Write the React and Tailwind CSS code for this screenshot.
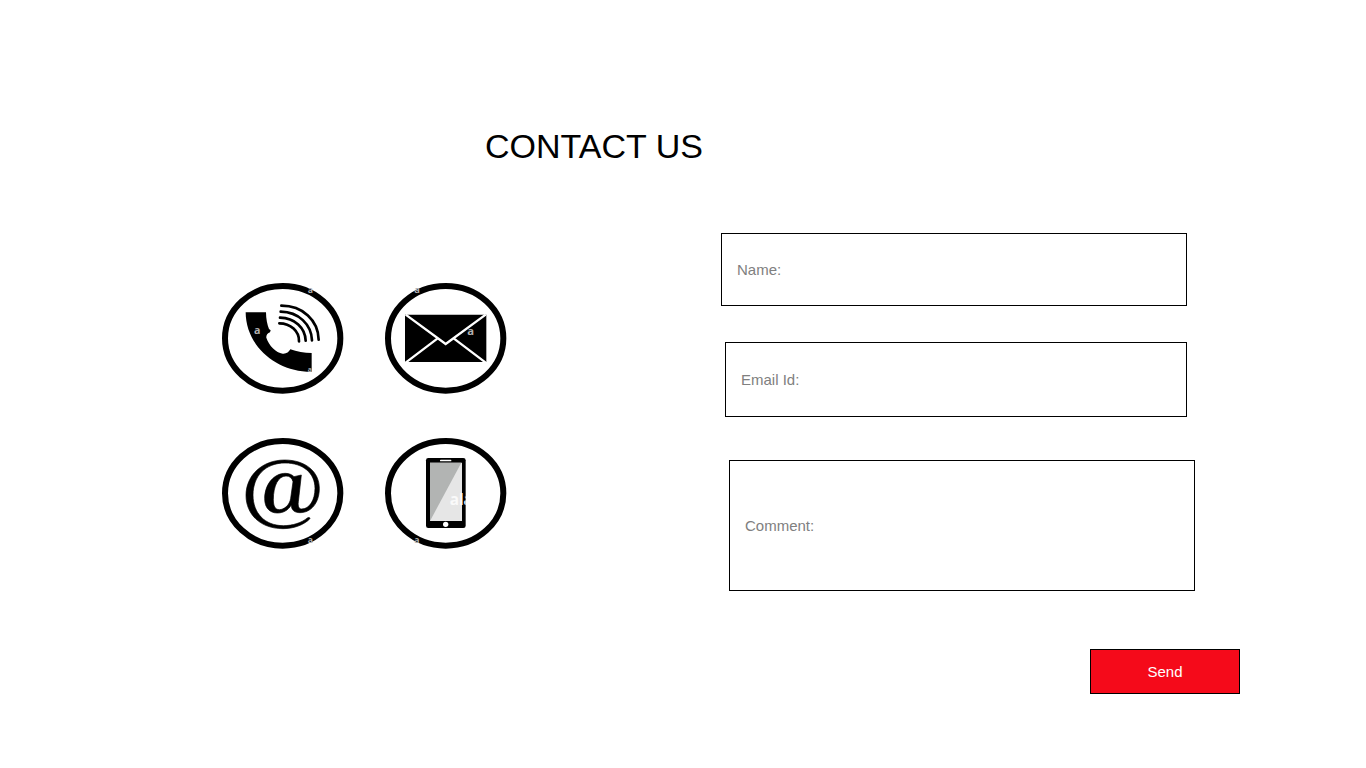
import React from "react";

function Mark({ x, y, size = 24 }) {
  return (
    <text x={x} y={y} fontSize={size} fontWeight="700" fill="#b0b0b0" fontFamily="Open Sans, sans-serif">
      a
    </text>
  );
}

function Badge({ label, children }) {
  return (
    <svg role="img" aria-label={label} viewBox="36 36 366 336" className="h-28 w-[122px]">
      <ellipse cx="218" cy="205" rx="173" ry="157" fill="none" stroke="#000" strokeWidth="18" />
      {children}
    </svg>
  );
}

function PhoneBadge() {
  return (
    <Badge label="Phone">
      <path d="M107 127H168C168 146 172 165 177 177L182 181L180 187C173 189 168 196 169 203C176 226 198 248 218 251C229 252 236 247 241 238C260 245 283 249 305 249V305H290C187 299 107 220 107 127Z" />
      <g fill="none" stroke="#000" strokeWidth="8" strokeLinecap="round">
        <path d="M214 107C278 107 325 151 326 209" />
        <path d="M212 125C266 126 304 163 306 211" />
        <path d="M210 143C254 144 286 173 287 212" />
        <path d="M208 160C242 160 268 184 267 214" />
      </g>
      <Mark x={132} y={193} size={32} />
      <Mark x={293} y={68} size={26} />
      <Mark x={293} y={307} size={20} />
    </Badge>
  );
}

function MailBadge() {
  return (
    <Badge label="Mail">
      <path d="M96 134H340V276H96Z" />
      <path
        d="M98 134L218 222L338 134M98 278L193 206M338 278L243 206"
        fill="none"
        stroke="#fff"
        strokeWidth="7"
      />
      <Mark x={283} y={194} size={34} />
      <Mark x={124} y={68} size={28} />
    </Badge>
  );
}

function AtBadge() {
  return (
    <Badge label="Email address">
      <path
        fillRule="evenodd"
        stroke="#000"
        strokeWidth="2"
        d="M299 282C281 300 251 311 219 311C151 311 108 268 108 211C108 151 157 105 224 105C286 105 328 140 328 190C328 234 303 263 270 263C253 263 244 255 244 240C234 256 220 264 202 264C179 264 164 248 164 221C164 178 192 145 226 145C237 145 246 149 252 155L274 150L265 230C263 245 267 252 275 252C298 252 315 226 315 190C315 145 280 114 225 114C166 114 129 153 129 210C129 265 165 302 220 302C249 302 275 293 292 279C297 276 302 278 299 282ZM228 153C205 153 190 182 190 224C190 244 196 254 208 254C222 254 239 241 242 220L249 170C246 159 239 153 228 153Z"
      />
      <Mark x={293} y={355} size={26} />
    </Badge>
  );
}

function MobileBadge() {
  return (
    <Badge label="Mobile">
      <rect x="159" y="99" width="119" height="210" rx="7" />
      <path d="M171 113H267V288H171Z" fill="#e6e6e6" />
      <path d="M171 113H265L171 288Z" fill="#b2b4b3" />
      <rect x="201" y="104" width="34" height="5" rx="2" fill="#fff" />
      <circle cx="218" cy="298" r="8" fill="#fff" />
      <clipPath id="glass">
        <path d="M171 113H278V288H171Z" />
      </clipPath>
      <text x="230" y="240" fontSize="46" fontWeight="700" fill="#fafafa" fontFamily="Open Sans, sans-serif" clipPath="url(#glass)">
        ala
      </text>
      <Mark x={124} y={355} size={26} />
    </Badge>
  );
}

const field =
  "block rounded-none border border-black bg-white px-[15px] text-[15px] leading-5 text-black placeholder:text-[#808080] placeholder:opacity-100";

export default function App() {
  return (
    <main className="bg-white px-6 pt-[126px] pb-[74px] font-['Liberation_Sans',Arial,sans-serif] text-black lg:pr-[126px] lg:pl-[222px]">
      <h1 className="text-[34px] leading-10 lg:ml-[263px]">CONTACT US</h1>
      <div className="mt-[67px] flex flex-col gap-12 lg:flex-row lg:items-start lg:gap-[214px]">
        <section aria-label="Ways to reach us" className="grid shrink-0 grid-cols-[auto_auto] justify-start gap-x-[41px] gap-y-[43px] lg:mt-[49px]">
          <PhoneBadge />
          <MailBadge />
          <AtBadge />
          <MobileBadge />
        </section>
        <form className="flex min-w-0 flex-1 flex-col" onSubmit={(e) => e.preventDefault()}>
          <input type="text" aria-label="Name" placeholder="Name:" className={`${field} mr-[53px] h-[73px]`} />
          <input type="email" aria-label="Email Id" placeholder="Email Id:" className={`${field} mt-9 mr-[53px] ml-1 h-[75px]`} />
          <textarea aria-label="Comment" placeholder="Comment:" className={`${field} mt-[43px] mr-[45px] ml-2 h-[131px] resize-none pt-[55px]`} />
          <button type="submit" className="mt-[58px] h-[45px] w-[150px] self-end border border-black bg-[#f50a1a] text-[15px] leading-5 text-white">
            Send
          </button>
        </form>
      </div>
    </main>
  );
}
